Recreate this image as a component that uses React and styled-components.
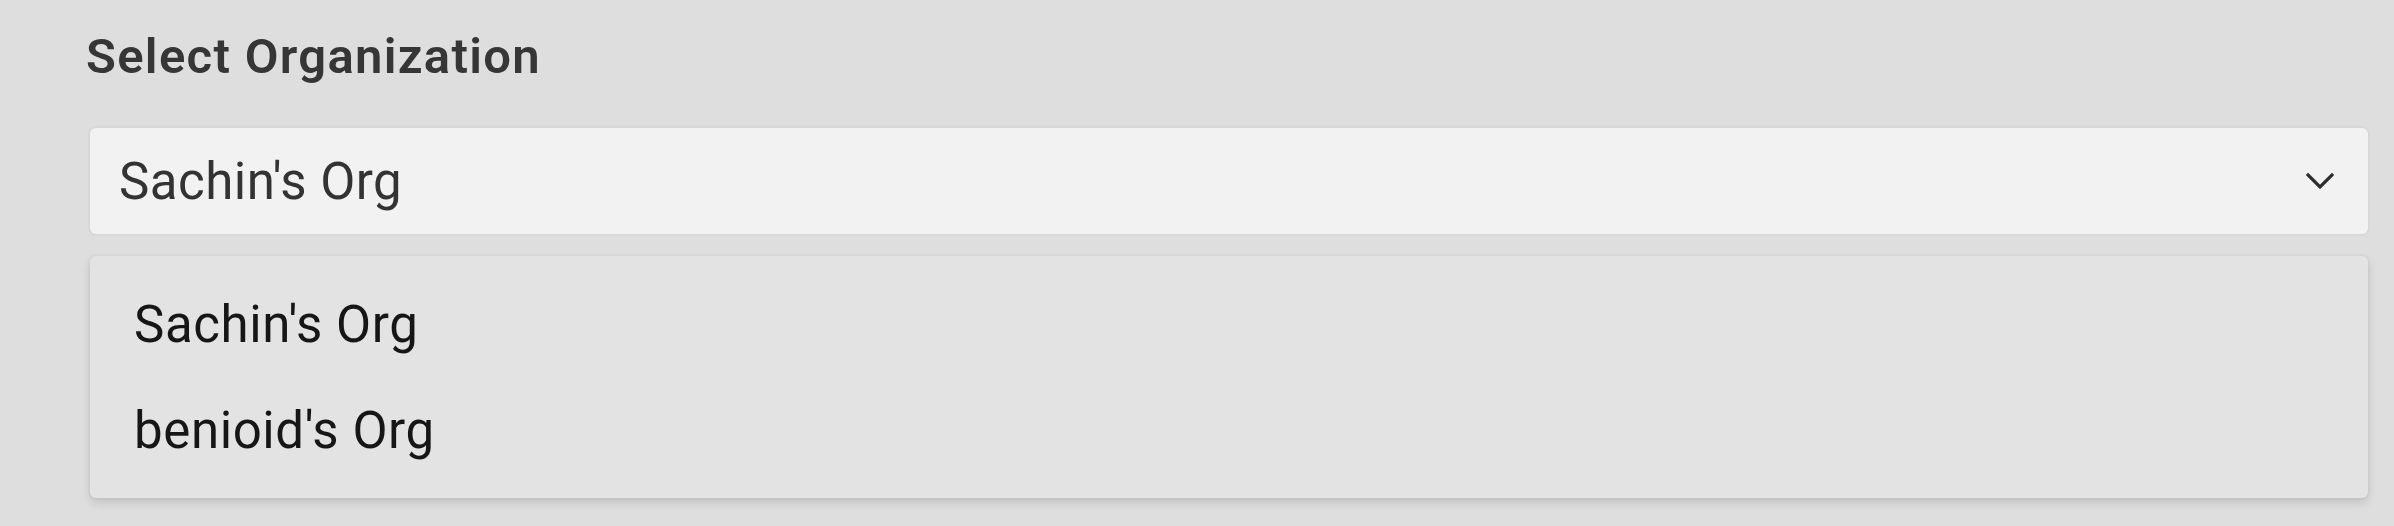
import React, { useState } from 'react';
import styled, { createGlobalStyle } from 'styled-components';

const GlobalStyle = createGlobalStyle`
  html, body {
    margin: 0;
    padding: 0;
    background-color: #dedede;
  }
  body {
    font-family: Roboto, "Liberation Sans", sans-serif;
  }
`;

const StyledPage = styled.div`
  width: 2394px;
  height: 526px;
  box-sizing: border-box;
  padding: 32px 26px 0 90px;
  display: flex;
  flex-direction: column;
`;

const StyledTitle = styled.h2`
  margin: 0 0 47px -4px;
  font-size: 49px;
  line-height: 1;
  font-weight: 600;
  letter-spacing: 1.3px;
  color: #363636;
`;

const StyledSelect = styled.button`
  height: 106px;
  display: flex;
  align-items: center;
  justify-content: space-between;
  padding: 0 34px 0 29px;
  background-color: #f2f2f2;
  border: none;
  border-radius: 6px;
  box-shadow: 0 0 0 2px rgba(0, 0, 0, 0.025);
  font-family: inherit;
  font-size: 51px;
  line-height: 1;
  letter-spacing: 0.5px;
  color: #333333;
  cursor: pointer;
`;

const StyledMenu = styled.ul`
  list-style: none;
  margin: 22px 0 0;
  padding: 15px 0;
  background-color: #e3e3e3;
  border-radius: 6px;
  box-shadow: 0 0 0 2px rgba(0, 0, 0, 0.02), 0 5px 10px rgba(0, 0, 0, 0.12);
`;

const StyledOption = styled.li`
  height: 106px;
  display: flex;
  align-items: center;
  padding: 0 44px;
  font-size: 51px;
  line-height: 1;
  letter-spacing: 0.6px;
  color: ${({ active }) => (active ? '#161616' : '#161616')};
`;

const Chevron = () => (
  <svg width="28" height="16" viewBox="0 0 28 16" fill="none">
    <path
      d="M2 2 L14 14 L26 2"
      stroke="#2e2e2e"
      strokeWidth="3.2"
      strokeLinecap="square"
    />
  </svg>
);

const orgs = ["Sachin's Org", "benioid's Org"];

const App = () => {
  const [selected] = useState(orgs[0]);

  return (
    <StyledPage>
      <GlobalStyle />
      <StyledTitle>Select Organization</StyledTitle>
      <StyledSelect>
        <span>{selected}</span>
        <Chevron />
      </StyledSelect>
      <StyledMenu>
        {orgs.map((org) => (
          <StyledOption key={org} active={org === selected}>
            {org}
          </StyledOption>
        ))}
      </StyledMenu>
    </StyledPage>
  );
};

export default App;
